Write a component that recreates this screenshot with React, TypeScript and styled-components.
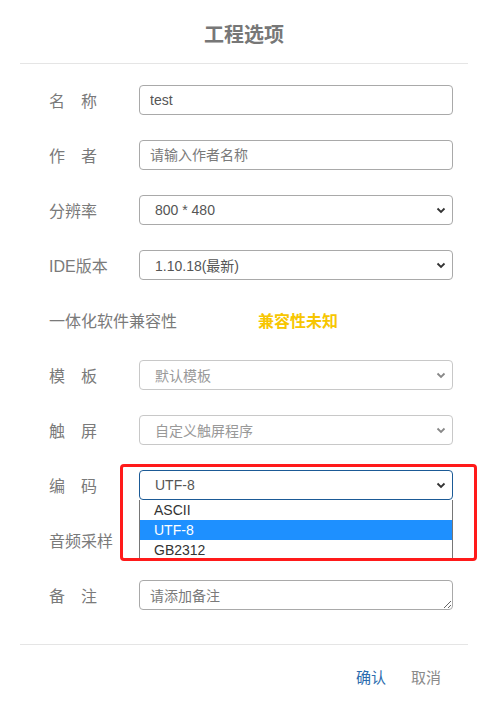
import React from "react";
import styled, { createGlobalStyle } from "styled-components";

const GlobalStyle = createGlobalStyle`
  body {
    margin: 0;
    background: #fff;
    font-family: "Liberation Sans", "Noto Sans CJK SC", sans-serif;
  }
`;

const Dialog = styled.div`
  width: 486px;
  height: 701px;
  background: #fff;
  display: flex;
  flex-direction: column;
`;

const Header = styled.div`
  height: 64px;
  margin: 0 18px 0 20px;
  border-bottom: 1px solid #e5e5e5;
  display: flex;
  align-items: center;
  justify-content: center;
  box-sizing: border-box;
  padding-top: 4px;
`;

const Title = styled.h2`
  margin: 0;
  font-size: 20px;
  font-weight: bold;
  color: #777;
`;

const Form = styled.div`
  display: flex;
  flex-direction: column;
  gap: 25px;
  padding: 21px 15px 34px 29px;
  border-bottom: 1px solid #e5e5e5;
  margin: 0 18px 0 20px;
`;

const Row = styled.div`
  display: flex;
  align-items: center;
  height: 30px;
`;

const Label = styled.div<{ $spread?: boolean }>`
  width: 90px;
  flex-shrink: 0;
  font-size: 16px;
  color: #7a7a7a;
  display: flex;
  justify-content: ${(p) => (p.$spread ? "space-between" : "flex-start")};
  max-width: ${(p) => (p.$spread ? "48px" : "90px")};
  margin-right: ${(p) => (p.$spread ? "42px" : "0")};
  white-space: nowrap;
`;

const WideLabel = styled.div`
  width: 209px;
  flex-shrink: 0;
  font-size: 16px;
  color: #7a7a7a;
  white-space: nowrap;
`;

const Warning = styled.div`
  font-size: 16px;
  font-weight: bold;
  color: #f7c600;
`;

const Field = styled.div`
  position: relative;
  width: 314px;
  height: 30px;
`;

const TextInput = styled.input`
  width: 100%;
  height: 30px;
  box-sizing: border-box;
  border: 1px solid #a9a9a9;
  border-radius: 4px;
  padding: 0 10px;
  font-size: 14px;
  font-family: inherit;
  color: #555;
  outline: none;

  &::placeholder {
    color: #7a7a7a;
  }
`;

const Notes = styled.textarea`
  width: 100%;
  height: 30px;
  box-sizing: border-box;
  border: 1px solid #a9a9a9;
  border-radius: 4px;
  padding: 4px 10px;
  font-size: 14px;
  font-family: inherit;
  color: #555;
  outline: none;
  resize: vertical;
  display: block;

  &::placeholder {
    color: #7a7a7a;
  }
`;

const SelectBox = styled.div<{ $disabled?: boolean; $focused?: boolean }>`
  height: 30px;
  box-sizing: border-box;
  border: 1px solid
    ${(p) => (p.$focused ? "#1b5a96" : p.$disabled ? "#c8c8c8" : "#a9a9a9")};
  border-radius: 4px;
  display: flex;
  align-items: center;
  justify-content: space-between;
  padding: 0 6px 0 15px;
  font-size: 14px;
  color: ${(p) => (p.$disabled ? "#999" : "#555")};
  background: #fff;
`;

const Chevron = styled.svg<{ $disabled?: boolean }>`
  width: 10px;
  height: 10px;
  color: ${(p) => (p.$disabled ? "#888" : "#333")};
`;

const Options = styled.ul`
  position: absolute;
  top: 30px;
  left: 0;
  width: 314px;
  box-sizing: border-box;
  margin: 0;
  padding: 0;
  list-style: none;
  border: 1px solid #767676;
  border-top: none;
  background: #fff;
  z-index: 2;
`;

const Option = styled.li<{ $active?: boolean }>`
  height: 20px;
  line-height: 20px;
  padding-left: 14px;
  font-size: 14px;
  color: ${(p) => (p.$active ? "#fff" : "#333")};
  background: ${(p) => (p.$active ? "#1e90ff" : "#fff")};
`;

const Highlight = styled.div`
  position: absolute;
  left: -19px;
  top: -6px;
  width: 357px;
  height: 97px;
  box-sizing: border-box;
  border: 3px solid #ff1a1a;
  border-radius: 4px;
  z-index: 3;
  pointer-events: none;
`;

const Footer = styled.div`
  display: flex;
  justify-content: flex-end;
  gap: 25px;
  padding: 21px 45px 0 0;
`;

const FooterButton = styled.button<{ $primary?: boolean }>`
  border: none;
  background: none;
  padding: 0;
  font-family: inherit;
  font-size: 15px;
  color: ${(p) => (p.$primary ? "#2c6cae" : "#8a8a8a")};
  cursor: pointer;
`;

const Arrow = ({ disabled }: { disabled?: boolean }) => (
  <Chevron $disabled={disabled} viewBox="0 0 10 10">
    <path d="M1.5 3.5 L5 7 L8.5 3.5" fill="none" stroke="currentColor" strokeWidth="1.8" />
  </Chevron>
);

const Select = ({ value, disabled, focused }: { value: string; disabled?: boolean; focused?: boolean }) => (
  <SelectBox $disabled={disabled} $focused={focused}>
    <span>{value}</span>
    <Arrow disabled={disabled} />
  </SelectBox>
);

// two-character labels are spread to the width of three characters
const SpreadLabel = ({ text }: { text: string }) => (
  <Label $spread>
    {text.split("").map((c) => (
      <span key={c}>{c}</span>
    ))}
  </Label>
);

const encodings = ["ASCII", "UTF-8", "GB2312"];

export default function App() {
  return (
    <Dialog>
      <GlobalStyle />
      <Header>
        <Title>工程选项</Title>
      </Header>

      <Form>
        <Row>
          <SpreadLabel text="名称" />
          <Field><TextInput defaultValue="test" /></Field>
        </Row>
        <Row>
          <SpreadLabel text="作者" />
          <Field><TextInput placeholder="请输入作者名称" /></Field>
        </Row>
        <Row>
          <Label>分辨率</Label>
          <Field><Select value="800 * 480" /></Field>
        </Row>
        <Row>
          <Label>IDE版本</Label>
          <Field><Select value="1.10.18(最新)" /></Field>
        </Row>
        <Row>
          <WideLabel>一体化软件兼容性</WideLabel>
          <Warning>兼容性未知</Warning>
        </Row>
        <Row>
          <SpreadLabel text="模板" />
          <Field><Select value="默认模板" disabled /></Field>
        </Row>
        <Row>
          <SpreadLabel text="触屏" />
          <Field><Select value="自定义触屏程序" disabled /></Field>
        </Row>
        <Row>
          <SpreadLabel text="编码" />
          <Field>
            <Select value="UTF-8" focused />
            <Options>
              {encodings.map((e) => (
                <Option key={e} $active={e === "UTF-8"}>{e}</Option>
              ))}
            </Options>
            <Highlight />
          </Field>
        </Row>
        <Row>
          <Label>音频采样</Label>
          <Field><Select value="" /></Field>
        </Row>
        <Row>
          <SpreadLabel text="备注" />
          <Field><Notes placeholder="请添加备注" /></Field>
        </Row>
      </Form>

      <Footer>
        <FooterButton $primary>确认</FooterButton>
        <FooterButton>取消</FooterButton>
      </Footer>
    </Dialog>
  );
}
